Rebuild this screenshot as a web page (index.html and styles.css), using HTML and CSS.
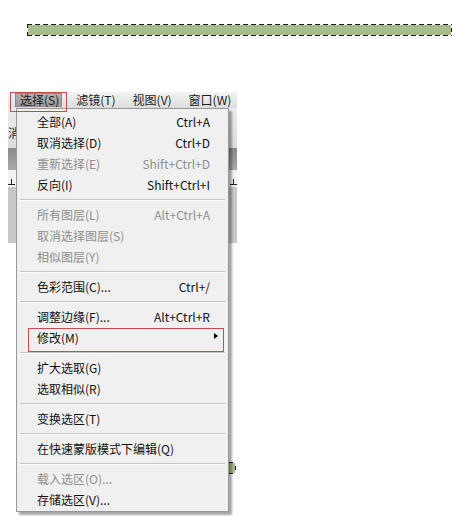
FILE: index.html
```html
<!DOCTYPE html>
<html lang="zh-CN">
<head>
<meta charset="utf-8">
<title>选择菜单</title>
<link rel="stylesheet" href="styles.css">
</head>
<body>
<div class="sel-bar sel-top"></div>
<div class="app">
  <div class="menubar">
    <span class="mb-item active">选择(S)</span>
    <span class="mb-item">滤镜(T)</span>
    <span class="mb-item">视图(V)</span>
    <span class="mb-item">窗口(W)</span>
  </div>
  <div class="panel">
    <div class="pr pr-light"><span class="ptext">消</span></div>
    <div class="pr pr-dark"></div>
    <div class="pr pr-white"><span class="tick"></span><span class="tick"></span></div>
    <div class="pr pr-gray"></div>
  </div>
  <div class="sel-bar sel-low"></div>

  <div class="menu">
    <div class="mi"><span>全部(A)</span><span>Ctrl+A</span></div>
    <div class="mi"><span>取消选择(D)</span><span>Ctrl+D</span></div>
    <div class="mi dis"><span>重新选择(E)</span><span>Shift+Ctrl+D</span></div>
    <div class="mi"><span>反向(I)</span><span>Shift+Ctrl+I</span></div>
    <div class="sep"></div>
    <div class="mi dis"><span>所有图层(L)</span><span>Alt+Ctrl+A</span></div>
    <div class="mi dis"><span>取消选择图层(S)</span></div>
    <div class="mi dis"><span>相似图层(Y)</span></div>
    <div class="sep"></div>
    <div class="mi"><span>色彩范围(C)...</span><span>Ctrl+/</span></div>
    <div class="sep"></div>
    <div class="mi"><span>调整边缘(F)...</span><span>Alt+Ctrl+R</span></div>
    <div class="mi sub marked"><span>修改(M)</span><span class="arrow"></span></div>
    <div class="sep"></div>
    <div class="mi"><span>扩大选取(G)</span></div>
    <div class="mi"><span>选取相似(R)</span></div>
    <div class="sep"></div>
    <div class="mi"><span>变换选区(T)</span></div>
    <div class="sep"></div>
    <div class="mi"><span>在快速蒙版模式下编辑(Q)</span></div>
    <div class="sep"></div>
    <div class="mi dis"><span>载入选区(O)...</span></div>
    <div class="mi"><span>存储选区(V)...</span></div>
  </div>
  <div class="mark-top"></div>
</div>
</body>
</html>
```
FILE: styles.css
```css
html, body {
  margin: 0;
  padding: 0;
  background: #ffffff;
}
body {
  font-family: "Noto Sans CJK SC", "Microsoft YaHei", sans-serif;
  font-size: 12px;
  color: #111;
  width: 452px;
  height: 516px;
  overflow: hidden;
}

/* selection marquee bars */
.sel-bar {
  height: 12px;
  background:
    repeating-linear-gradient(90deg, #1a1a1a 0 5px, transparent 5px 8px) left top / 100% 1px no-repeat,
    repeating-linear-gradient(90deg, #1a1a1a 0 5px, transparent 5px 8px) left bottom / 100% 1px no-repeat,
    repeating-linear-gradient(180deg, #1a1a1a 0 4px, transparent 4px 8px) left top / 1px 100% no-repeat,
    repeating-linear-gradient(180deg, transparent 0 4px, #1a1a1a 4px 8px) right top / 1px 100% no-repeat,
    linear-gradient(#a9bc8b, #a9bc8b) center / calc(100% - 2px) calc(100% - 2px) no-repeat;
}
.sel-top {
  margin: 24px 0 0 27px;
  width: 425px;
}
.sel-low {
  margin: 219px 1px 0 20px;
}

/* application window fragment */
.app {
  position: relative;
  margin: 56px 0 0 8px;
  width: 229px;
}
.menubar {
  height: 16px;
  display: flex;
  align-items: center;
  gap: 9px;
  padding-left: 7px;
  background: linear-gradient(#f4f4f4, #dcdcdc);
  line-height: 14px;
}
.mb-item {
  padding: 0 3px 0 5px;
  height: 14px;
  color: #1a1a1a;
  white-space: nowrap;
}
.mb-item.active {
  background: linear-gradient(#b4b4b4, #979797);
  box-shadow: inset 0 0 0 1px #8a8a8a;
}

.panel {
  display: flex;
  flex-direction: column;
}
.pr-light {
  height: 40px;
  background: linear-gradient(#ececec, #dcdcdc);
}
.ptext {
  display: block;
  padding-top: 17px;
  line-height: 16px;
  color: #222;
}
.pr-dark {
  height: 22px;
  background: linear-gradient(#8a8a8a, #a9a9a9);
}
.pr-white {
  height: 17px;
  background: #f3f3f3;
  display: flex;
  justify-content: space-between;
  align-items: flex-end;
  padding-bottom: 2px;
  box-sizing: border-box;
}
.tick {
  width: 7px;
  height: 5px;
  border-bottom: 1px solid #222;
  background: linear-gradient(#222, #222) center / 1px 100% no-repeat;
}
.pr-gray {
  height: 56px;
  background: #c8c8c8;
}

/* dropdown menu */
.menu {
  position: absolute;
  left: 8px;
  top: 16px;
  width: 211px;
  padding: 2px 0 1px;
  background: #f0f0f0;
  border: 1px solid #979797;
  box-shadow: 3px 3px 2px rgba(0, 0, 0, 0.35);
  z-index: 2;
}
.mi {
  position: relative;
  height: 21px;
  line-height: 21px;
  padding: 0 18px 0 20px;
  display: flex;
  justify-content: space-between;
  color: #111;
  white-space: nowrap;
}
.mi.dis {
  color: #8e8e8e;
}
.sep {
  height: 1px;
  margin: 4px 3px 4px 3px;
  background: #c4c4c4;
  box-shadow: 0 1px 0 #fbfbfb;
}
.arrow {
  position: absolute;
  right: 10px;
  top: 6px;
  width: 0;
  height: 0;
  border-left: 4px solid #000;
  border-top: 3px solid transparent;
  border-bottom: 3px solid transparent;
}
.marked::after {
  content: "";
  position: absolute;
  left: 11px;
  right: 4px;
  top: 1px;
  bottom: -4px;
  border: 1px solid #c94a4a;
  pointer-events: none;
}

/* annotation box on the menubar */
.mark-top {
  position: absolute;
  left: 2px;
  top: 0;
  width: 55px;
  height: 18px;
  border: 1px solid #c94a4a;
  z-index: 3;
}
```
